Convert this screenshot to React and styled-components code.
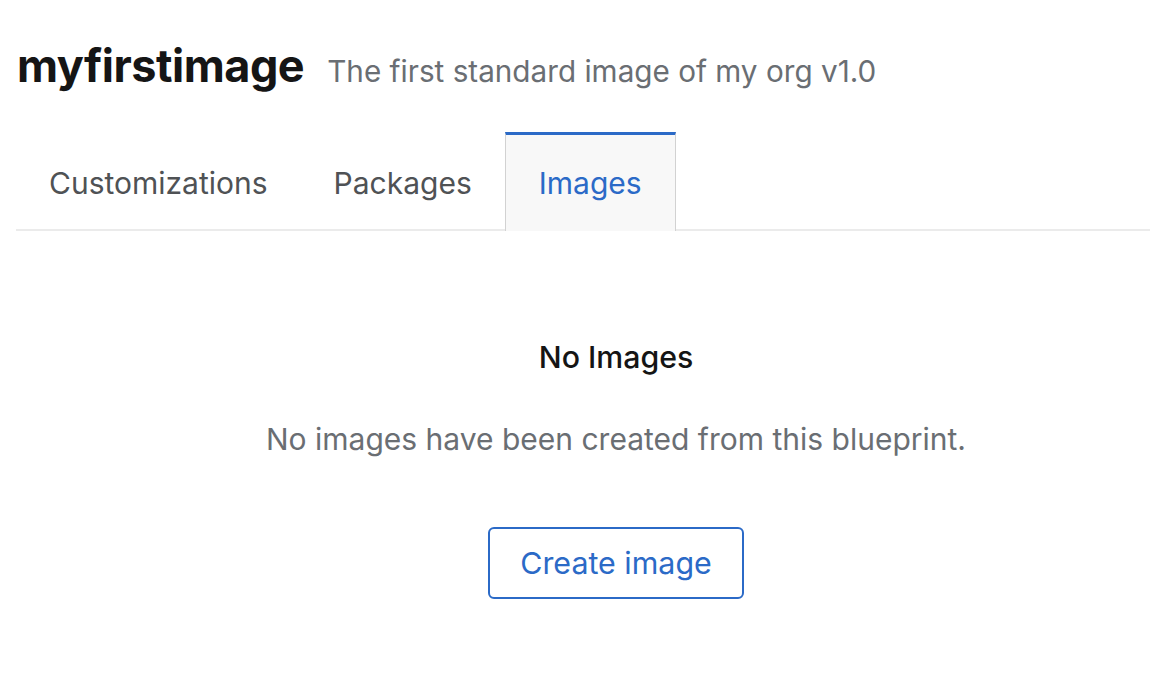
import React from "react";
import styled, { createGlobalStyle } from "styled-components";

const GlobalStyle = createGlobalStyle`
  html, body {
    margin: 0;
    padding: 0;
    background: #ffffff;
    font-family: "Inter", "Liberation Sans", sans-serif;
  }
`;

const Page = styled.div`
  width: 1150px;
  height: 700px;
  padding-left: 16px;
  box-sizing: border-box;
  overflow: hidden;
`;

const Header = styled.div`
  display: flex;
  align-items: baseline;
  gap: 23px;
  padding: 40px 0 0 1px;
  height: 92px;
  box-sizing: border-box;
`;

const Title = styled.h1`
  margin: 0;
  font-size: 45px;
  line-height: 52px;
  font-weight: 700;
  color: #151515;
  letter-spacing: -0.5px;
`;

const Subtitle = styled.span`
  font-size: 29.7px;
  line-height: 40px;
  color: #6a6e73;
`;

const TabList = styled.div`
  display: flex;
  margin-top: 40px;
  border-bottom: 2px solid #ebebeb;
`;

const Tab = styled.div`
  height: 99px;
  box-sizing: border-box;
  display: flex;
  align-items: center;
  padding: 0 ${p => (p.active ? "33px" : "32px")};
  font-size: 30px;
  color: ${p => (p.active ? "#2b6ac7" : "#4f5255")};
  background: ${p => (p.active ? "#f8f8f8" : "transparent")};
  border-top: 3px solid ${p => (p.active ? "#2b6ac7" : "transparent")};
  border-left: 1px solid ${p => (p.active ? "#d2d2d2" : "transparent")};
  border-right: 1px solid ${p => (p.active ? "#d2d2d2" : "transparent")};
  margin-bottom: -2px;
`;

const EmptyState = styled.div`
  display: flex;
  flex-direction: column;
  align-items: center;
  padding: 106px 0 0 66px;
`;

const EmptyTitle = styled.h2`
  margin: 0;
  font-size: 30.3px;
  line-height: 40px;
  font-weight: 500;
  color: #151515;
`;

const EmptyBody = styled.p`
  margin: 42px 0 0;
  font-size: 30px;
  line-height: 40px;
  color: #6a6e73;
`;

const Button = styled.button`
  margin-top: 68px;
  width: 256px;
  height: 72px;
  border: 2px solid #2b6ac7;
  border-radius: 6px;
  background: #fff;
  color: #2b6ac7;
  font-family: inherit;
  font-size: 30.4px;
  cursor: pointer;
`;

export default function App() {
  return (
    <Page>
      <GlobalStyle />
      <Header>
        <Title>myfirstimage</Title>
        <Subtitle>The first standard image of my org v1.0</Subtitle>
      </Header>
      <TabList>
        <Tab>Customizations</Tab>
        <Tab>Packages</Tab>
        <Tab active>Images</Tab>
      </TabList>
      <EmptyState>
        <EmptyTitle>No Images</EmptyTitle>
        <EmptyBody>No images have been created from this blueprint.</EmptyBody>
        <Button>Create image</Button>
      </EmptyState>
    </Page>
  );
}
